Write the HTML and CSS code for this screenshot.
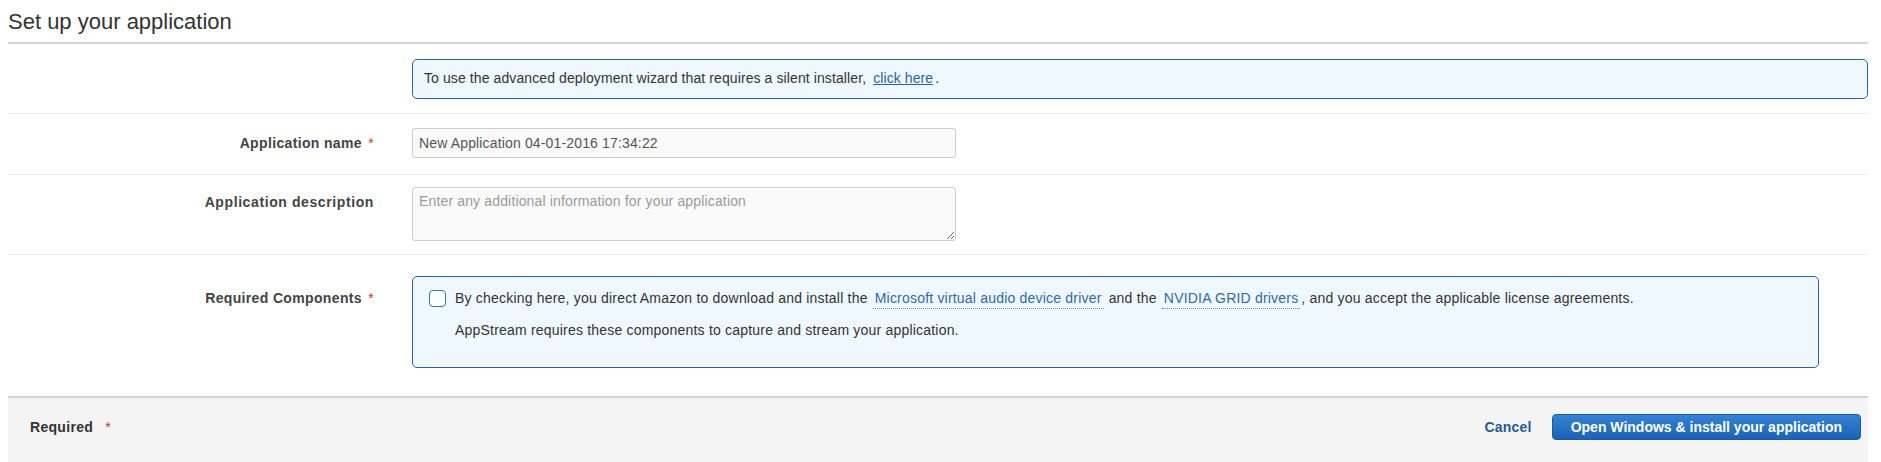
FILE: index.html
```html
<!DOCTYPE html>
<html lang="en">
<head>
<meta charset="utf-8">
<title>Set up your application</title>
<link rel="stylesheet" href="styles.css">
</head>
<body>
<div class="page">
  <h1 class="title">Set up your application</h1>

  <div class="row row-info">
    <div class="label"></div>
    <div class="field">
      <div class="info-box">To use the advanced deployment wizard that requires a silent installer, <a class="plain-link" href="#">click here</a>.</div>
    </div>
  </div>

  <div class="row row-name">
    <div class="label label-name">Application name <span class="req">*</span></div>
    <div class="field">
      <input class="text-input" type="text" value="New Application 04-01-2016 17:34:22">
    </div>
  </div>

  <div class="row row-desc">
    <div class="label label-desc">Application description</div>
    <div class="field">
      <textarea class="text-area" placeholder="Enter any additional information for your application"></textarea>
    </div>
  </div>

  <div class="row row-comp">
    <div class="label label-comp">Required Components <span class="req">*</span></div>
    <div class="field">
      <div class="comp-box">
        <span class="check"></span>
        <div class="comp-text">
          <p class="comp-line">By checking here, you direct Amazon to download and install the <a class="dotted-link" href="#">Microsoft virtual audio device driver</a> and the <a class="dotted-link" href="#">NVIDIA GRID drivers</a>, and you accept the applicable license agreements.</p>
          <p class="comp-line comp-line-2">AppStream requires these components to capture and stream your application.</p>
        </div>
      </div>
    </div>
  </div>

  <div class="footer">
    <div class="footer-req">Required <span class="req">*</span></div>
    <div class="footer-actions">
      <a class="cancel" href="#">Cancel</a>
      <button class="primary" type="button">Open Windows &amp; install your application</button>
    </div>
  </div>
</div>
</body>
</html>
```

FILE: styles.css
```css
html, body {
  margin: 0;
  padding: 0;
  background: #ffffff;
}

body {
  font-family: "Liberation Sans", Arial, sans-serif;
  font-size: 14px;
  color: #444444;
  letter-spacing: 0.15px;
}

.page {
  width: 1860px;
  margin: 8px 0 0 8px;
}

.title {
  margin: 0;
  padding: 1px 0 8px 0;
  font-size: 22px;
  font-weight: normal;
  line-height: 25px;
  color: #333333;
  letter-spacing: 0;
  border-bottom: 2px solid #d5d5d5;
}

.row {
  display: grid;
  grid-template-columns: 372px 1fr;
  column-gap: 32px;
  border-bottom: 1px solid #eaeaea;
}

.label {
  text-align: right;
  font-weight: bold;
  color: #444444;
  line-height: 17px;
  letter-spacing: 0.35px;
  padding-right: 6px;
}

.req {
  color: #d0312d;
  font-weight: normal;
  margin-left: 2px;
}

.row-info {
  padding: 15px 0 14px 0;
}

.info-box {
  border: 1px solid #2a649c;
  border-radius: 5px;
  background: #f0f8ff;
  padding: 10px 12px 11px 11px;
  line-height: 17px;
  color: #333333;
  letter-spacing: 0.1px;
}

.plain-link {
  color: #2466a2;
  text-decoration: underline;
  margin: 0 2px 0 3px;
}

.row-name {
  padding: 14px 0 16px 0;
}

.label-name {
  padding-top: 7px;
}

.text-input {
  box-sizing: border-box;
  display: block;
  width: 544px;
  height: 30px;
  margin: 0;
  padding: 0 6px;
  border: 1px solid #cccccc;
  border-radius: 3px;
  background: #fafafa;
  font-family: "Liberation Sans", Arial, sans-serif;
  font-size: 14px;
  letter-spacing: 0.15px;
  color: #555555;
}

.row-desc {
  padding: 12px 0 13px 0;
}

.label-desc {
  padding-top: 7px;
  letter-spacing: 0.6px;
}

.text-area {
  box-sizing: border-box;
  display: block;
  width: 544px;
  height: 54px;
  margin: 0;
  padding: 5px 6px;
  border: 1px solid #cccccc;
  border-radius: 3px;
  background: #fafafa;
  font-family: "Liberation Sans", Arial, sans-serif;
  font-size: 14px;
  line-height: 17px;
  letter-spacing: 0.15px;
  color: #555555;
}

.text-area::placeholder {
  color: #9a9a9a;
}

.row-comp {
  padding: 21px 0 28px 0;
  border-bottom: none;
}

.label-comp {
  padding-top: 14px;
}

.comp-box {
  display: flex;
  align-items: flex-start;
  gap: 9px;
  margin-right: 49px;
  border: 1px solid #2a649c;
  border-radius: 5px;
  background: #f0f8ff;
  padding: 13px 14px 15px 16px;
  color: #333333;
  letter-spacing: 0.2px;
}

.check {
  flex: none;
  width: 15px;
  height: 15px;
  margin-top: 0;
  border: 1.5px solid #3b72a8;
  border-radius: 4px;
  background: #ffffff;
}

.comp-text {
  flex: 1;
}

.comp-line {
  margin: 0;
  line-height: 17px;
}

.comp-line-2 {
  margin-top: 15px;
  margin-bottom: 13px;
}

.dotted-link {
  color: #2d6aa8;
  text-decoration: none;
  border-bottom: 1px dotted #5d87b8;
  padding: 0 2px 2px 2px;
  margin: 0 1px;
}

.footer {
  display: flex;
  justify-content: space-between;
  align-items: center;
  background: #f4f4f4;
  border-top: 2px solid #d3d3d3;
  padding: 16px 7px 24px 22px;
}

.footer-req {
  font-weight: bold;
  color: #333333;
  letter-spacing: 0.3px;
}

.footer-req .req {
  margin-left: 8px;
}

.footer-actions {
  display: flex;
  align-items: center;
  gap: 20px;
}

.cancel {
  font-weight: bold;
  color: #1f5c99;
  text-decoration: none;
  letter-spacing: 0.2px;
}

.primary {
  height: 26px;
  padding: 0 18px;
  border: 1px solid #1a5aa3;
  border-radius: 4px;
  background: linear-gradient(#3383d4, #1b62b6);
  color: #ffffff;
  font-family: "Liberation Sans", Arial, sans-serif;
  font-size: 14px;
  font-weight: bold;
  letter-spacing: 0;
}
```
